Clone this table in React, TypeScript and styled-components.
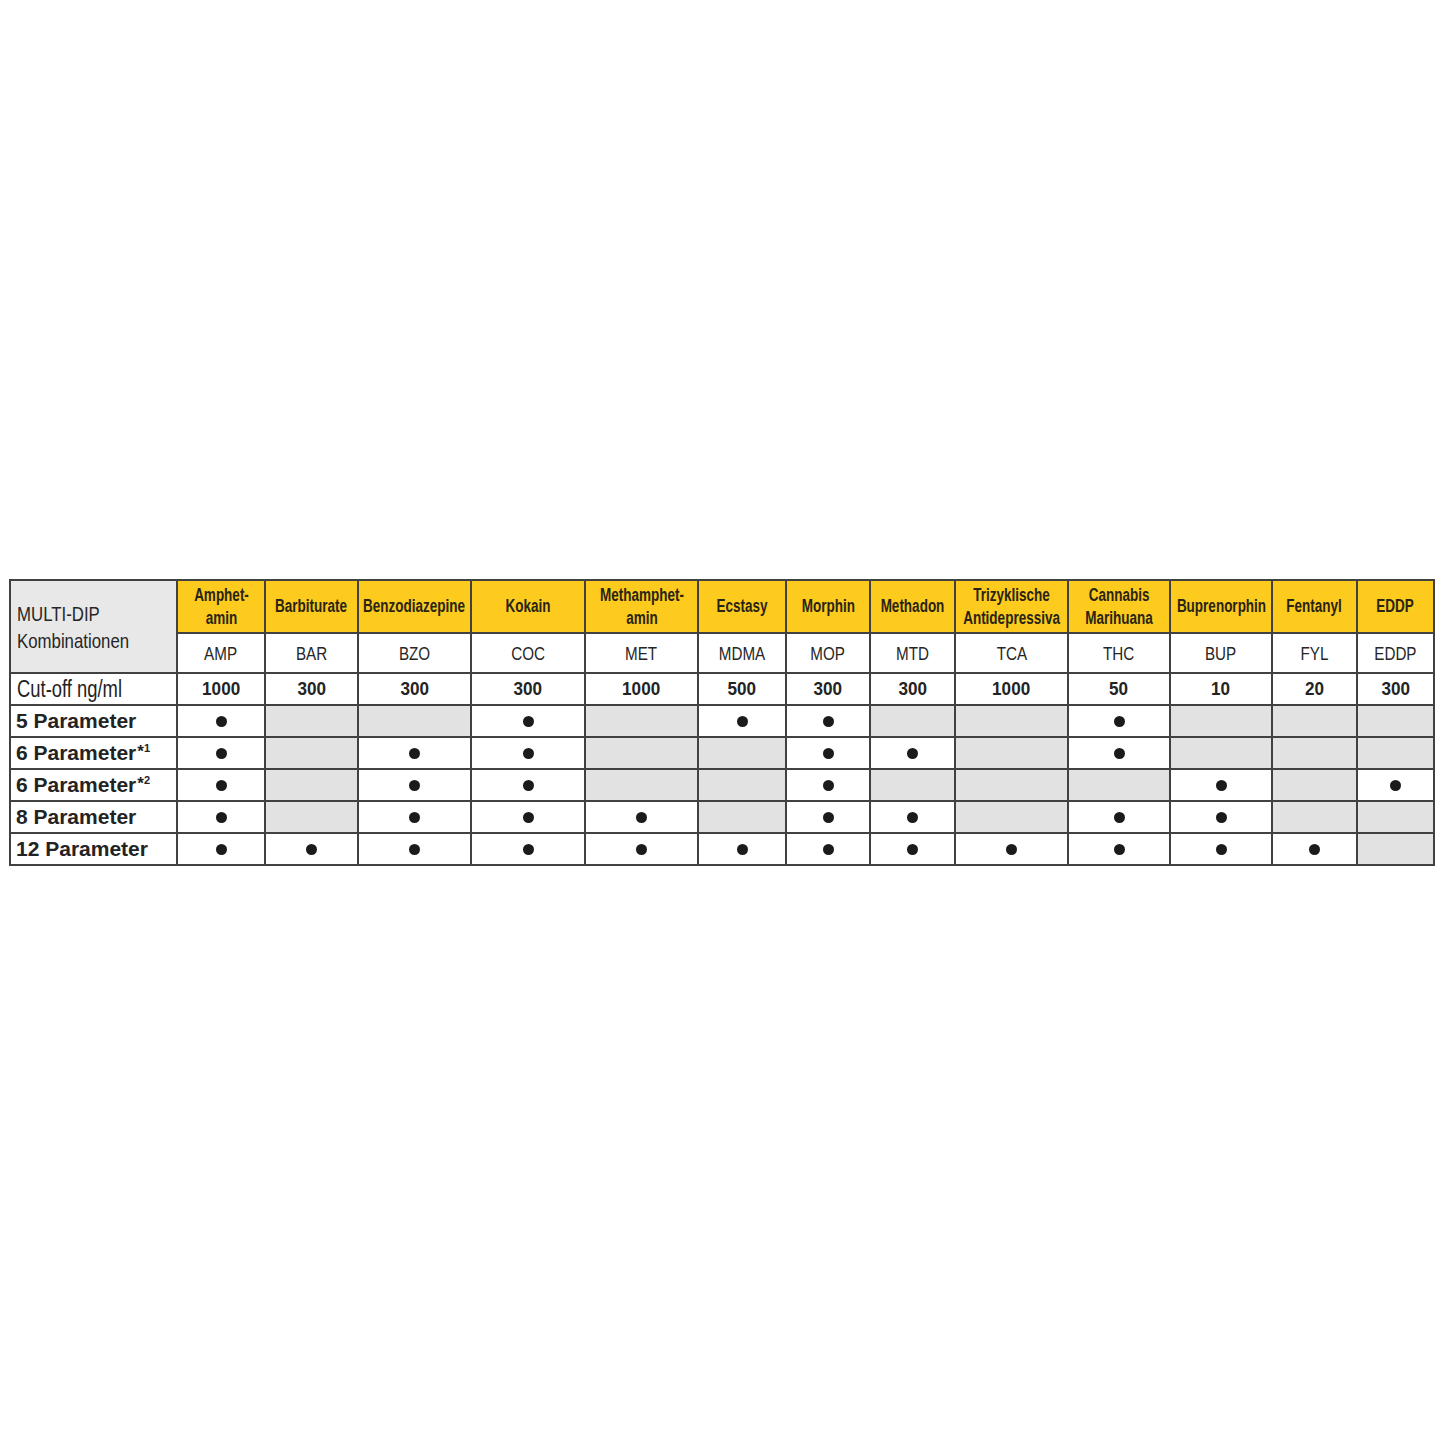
import React from 'react'
import styled, { createGlobalStyle } from 'styled-components'

const GlobalStyle = createGlobalStyle`
  html, body {
    margin: 0;
    padding: 0;
    background: #ffffff;
  }
  body {
    font-family: 'Liberation Sans', Arial, sans-serif;
    color: #1e1e1e;
  }
`

const drugs = [
  { name: ['Amphet-', 'amin'], code: 'AMP', cutoff: '1000', width: 88 },
  { name: ['Barbiturate'], code: 'BAR', cutoff: '300', width: 93 },
  { name: ['Benzodiazepine'], code: 'BZO', cutoff: '300', width: 113 },
  { name: ['Kokain'], code: 'COC', cutoff: '300', width: 114 },
  { name: ['Methamphet-', 'amin'], code: 'MET', cutoff: '1000', width: 113 },
  { name: ['Ecstasy'], code: 'MDMA', cutoff: '500', width: 88 },
  { name: ['Morphin'], code: 'MOP', cutoff: '300', width: 84 },
  { name: ['Methadon'], code: 'MTD', cutoff: '300', width: 85 },
  { name: ['Trizyklische', 'Antidepressiva'], code: 'TCA', cutoff: '1000', width: 113 },
  { name: ['Cannabis', 'Marihuana'], code: 'THC', cutoff: '50', width: 102 },
  { name: ['Buprenorphin'], code: 'BUP', cutoff: '10', width: 102 },
  { name: ['Fentanyl'], code: 'FYL', cutoff: '20', width: 85 },
  { name: ['EDDP'], code: 'EDDP', cutoff: '300', width: 77 },
]

const combos: { label: string; note?: string; set: number[] }[] = [
  { label: '5 Parameter', set: [1, 0, 0, 1, 0, 1, 1, 0, 0, 1, 0, 0, 0] },
  { label: '6 Parameter', note: '1', set: [1, 0, 1, 1, 0, 0, 1, 1, 0, 1, 0, 0, 0] },
  { label: '6 Parameter', note: '2', set: [1, 0, 1, 1, 0, 0, 1, 0, 0, 0, 1, 0, 1] },
  { label: '8 Parameter', set: [1, 0, 1, 1, 1, 0, 1, 1, 0, 1, 1, 0, 0] },
  { label: '12 Parameter', set: [1, 1, 1, 1, 1, 1, 1, 1, 1, 1, 1, 1, 0] },
]

const Page = styled.div`
  width: 1445px;
  height: 1445px;
  box-sizing: border-box;
  padding: 579px 10px 0 9px;
`

const Table = styled.table`
  width: 1424px;
  table-layout: fixed;
  border-collapse: collapse;
  border: 2px solid #414141;

  td {
    border: 2px solid #414141;
    padding: 0;
    vertical-align: middle;
    overflow: visible;
  }
`

/* the reference uses a condensed grotesque; Liberation Sans squeezed horizontally stands in */
const Fit = styled.div<{ $align?: 'left' | 'center' }>`
  display: flex;
  justify-content: ${(p) => (p.$align === 'left' ? 'flex-start' : 'center')};
  align-items: center;
`

const Narrow = styled.span<{ $scale?: number; $align?: 'left' | 'center' }>`
  display: inline-block;
  white-space: nowrap;
  flex: none;
  transform: scaleX(${(p) => p.$scale ?? 0.8});
  transform-origin: ${(p) => (p.$align === 'left' ? 'left center' : 'center')};
`

const TitleCell = styled.td`
  background: #e8e8e8;
  padding-left: 6px !important;
  font-size: 21px;
  line-height: 27px;
  color: #262626;
`

const DrugCell = styled.td`
  background: #fccb1e;
  height: 51px;
  font-weight: 700;
  font-size: 18px;
  line-height: 23px;
  color: #2a2414;
  text-align: center;
`

const CodeRow = styled.tr`
  height: 40px;
`

const CodeCell = styled.td`
  font-size: 19px;
  color: #262626;
  padding-top: 2px !important;
`

const ValueRow = styled.tr`
  height: 32px;
`

const LabelCell = styled.td`
  padding-left: 5px !important;
  white-space: nowrap;
  font-weight: 700;
  font-size: 21px;
  color: #232323;
`

const CutoffLabel = styled.td`
  padding-left: 6px !important;
  font-size: 23px;
  color: #232323;
`

const CutoffCell = styled.td`
  font-weight: 700;
  font-size: 19px;
  color: #232323;
`

const MarkCell = styled.td<{ $on: boolean }>`
  background: ${(p) => (p.$on ? '#ffffff' : '#e2e2e2')};
  text-align: center;
`

const Star = styled.span`
  font-size: 17px;
  position: relative;
  top: -3px;
  margin-left: 1px;
`

const Note = styled.span`
  font-size: 11px;
  position: relative;
  top: -8px;
`

const Dot = styled.span`
  display: inline-block;
  width: 11px;
  height: 11px;
  border-radius: 50%;
  background: #1b1b1b;
  margin-top: 5px;
`

export default function App() {
  return (
    <>
      <GlobalStyle />
      <Page>
        <Table>
          <colgroup>
            <col style={{ width: 167 }} />
            {drugs.map((d) => (
              <col key={d.code} style={{ width: d.width }} />
            ))}
          </colgroup>
          <tbody>
            <tr>
              <TitleCell rowSpan={2}>
                <Fit $align="left">
                  <Narrow $align="left">
                    MULTI-DIP
                    <br />
                    Kombinationen
                  </Narrow>
                </Fit>
              </TitleCell>
              {drugs.map((d) => (
                <DrugCell key={d.code}>
                  <Fit>
                    <Narrow $scale={0.75}>
                      {d.name.map((line, i) => (
                        <React.Fragment key={line}>
                          {i > 0 && <br />}
                          {line}
                        </React.Fragment>
                      ))}
                    </Narrow>
                  </Fit>
                </DrugCell>
              ))}
            </tr>
            <CodeRow>
              {drugs.map((d) => (
                <CodeCell key={d.code}>
                  <Fit>
                    <Narrow>{d.code}</Narrow>
                  </Fit>
                </CodeCell>
              ))}
            </CodeRow>
            <ValueRow>
              <CutoffLabel>
                <Fit $align="left">
                  <Narrow $align="left">Cut-off ng/ml</Narrow>
                </Fit>
              </CutoffLabel>
              {drugs.map((d) => (
                <CutoffCell key={d.code}>
                  <Fit>
                    <Narrow $scale={0.9}>{d.cutoff}</Narrow>
                  </Fit>
                </CutoffCell>
              ))}
            </ValueRow>
            {combos.map((c) => (
              <ValueRow key={c.label + (c.note || '')}>
                <LabelCell>
                  {c.label}
                  {c.note && (
                    <>
                      <Star>*</Star>
                      <Note>{c.note}</Note>
                    </>
                  )}
                </LabelCell>
                {c.set.map((on, i) => (
                  <MarkCell key={drugs[i].code} $on={on === 1}>
                    {on === 1 && <Dot />}
                  </MarkCell>
                ))}
              </ValueRow>
            ))}
          </tbody>
        </Table>
      </Page>
    </>
  )
}
